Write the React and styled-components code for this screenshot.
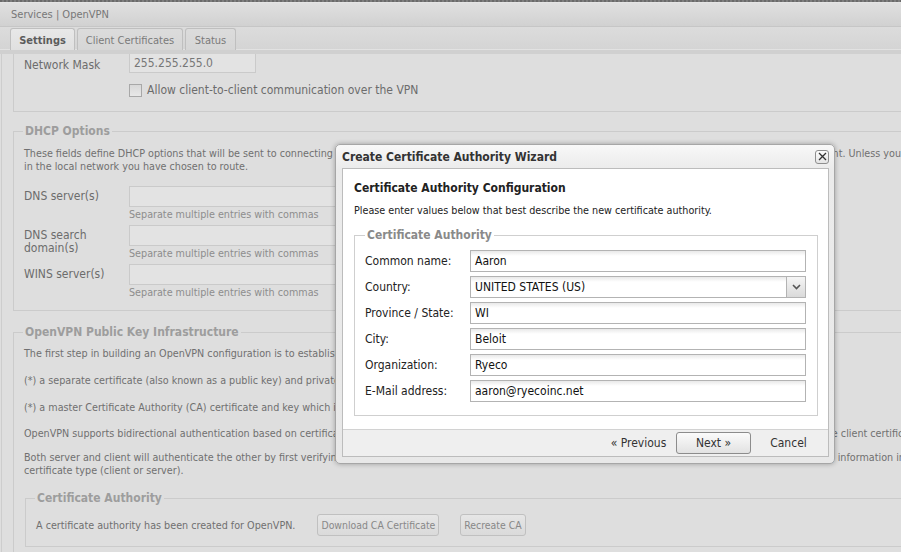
import React from "react";
import styled, { createGlobalStyle } from "styled-components";

const FONT = `"DejaVu Sans Condensed", "Liberation Sans", Arial, sans-serif`;

const GlobalStyle = createGlobalStyle`
  html, body {
    margin: 0;
    padding: 0;
    background: #dedede;
    overflow: hidden;
  }
  body {
    font-family: ${FONT};
  }
  * {
    box-sizing: border-box;
  }
`;

const Page = styled.div`
  position: relative;
  width: 901px;
  height: 552px;
  overflow: hidden;
  display: flex;
  flex-direction: column;
  background: #dedede;
`;

const TopStrip = styled.div`
  flex: none;
  height: 3px;
  background: repeating-linear-gradient(90deg, #6a6a6a 0 2px, #7e7e7e 2px 4px);
  border-bottom: 1px solid #e4e4e4;
`;

const Header = styled.div`
  flex: none;
  height: 24px;
  display: flex;
  align-items: center;
  padding-left: 11px;
  font-size: 11px;
  color: #777;
  background: linear-gradient(#e0e0e0, #d1d1d1);
  border-bottom: 1px solid #c6c6c6;
`;

const TabBar = styled.div`
  flex: none;
  height: 27px;
  display: flex;
  align-items: flex-end;
  gap: 2px;
  padding-left: 10px;
  background: linear-gradient(#dcdcdc, #d4d4d4);
  border-bottom: 4px solid #d0d0d0;
  box-shadow: inset 0 -1px 0 #e2e2e2;
`;

const Tab = styled.div`
  height: 22px;
  width: ${(p) => p.$w}px;
  padding-top: 1px;
  display: flex;
  align-items: center;
  justify-content: center;
  font-size: 11px;
  font-weight: ${(p) => (p.$active ? "bold" : "normal")};
  color: ${(p) => (p.$active ? "#5c5c5c" : "#7a7a7a")};
  background: ${(p) =>
    p.$active ? "linear-gradient(#e8e8e8, #e0e0e0)" : "linear-gradient(#dcdcdc, #d6d6d6)"};
  border: 1px solid #bfbfbf;
  border-bottom: none;
  border-radius: 3px 3px 0 0;
`;

const Viewport = styled.div`
  flex: 1;
  overflow: hidden;
  padding-left: 1px;
`;

const Panel = styled.div`
  width: 1100px;
  height: 100%;
  border-left: 1px solid #cdcdcd;
  padding-left: 11px;
`;

const Fieldset = styled.fieldset`
  margin: ${(p) => p.$mt || 0}px 0 0 ${(p) => p.$ml || 0}px;
  padding: 0 10px ${(p) => p.$pb || 12}px 10px;
  min-width: 0;
  width: ${(p) => p.$w || 1060}px;
  border: 1px solid #cbcbcb;
  ${(p) => p.$cut && "border-top: none;"}
`;

const Legend = styled.legend`
  padding: 0 2px;
  margin-left: -1px;
  font-size: 12px;
  line-height: 14px;
  font-weight: bold;
  color: #9d9d9d;
`;

const FieldRow = styled.div`
  display: grid;
  grid-template-columns: 105px auto;
  align-items: start;
  margin-top: ${(p) => p.$mt || 0}px;
`;

const FieldLabel = styled.div`
  font-size: 12px;
  line-height: 13px;
  color: #6c6c6c;
  padding-top: ${(p) => p.$pt || 4}px;
`;

const BgInput = styled.input`
  display: block;
  width: ${(p) => p.$w}px;
  height: ${(p) => p.$h || 21}px;
  margin: 0;
  padding: 0 4px;
  font-family: ${FONT};
  font-size: 12px;
  color: #777;
  background: #e3e3e3;
  border: 1px solid #cacaca;
  outline: none;
`;

const Hint = styled.div`
  margin-top: 1px;
  font-size: 10.7px;
  line-height: 13px;
  color: #8d8d8d;
`;

const Para = styled.p`
  margin: ${(p) => p.$mt}px 0 0;
  font-size: 10.7px;
  line-height: 13px;
  color: #707070;
  white-space: nowrap;
`;

const CheckRow = styled.label`
  display: flex;
  align-items: center;
  gap: 5px;
  font-size: 12px;
  color: #6c6c6c;
`;

const CheckBox = styled.span`
  width: 13px;
  height: 13px;
  border: 1px solid #a8a8a8;
  background: linear-gradient(#d8d8d8, #e8e8e8);
`;

const InlineRow = styled.div`
  display: flex;
  align-items: center;
  margin-top: 9px;
  font-size: 10.7px;
  color: #707070;
`;

const BgButton = styled.div`
  height: 22px;
  margin-left: ${(p) => p.$ml}px;
  padding: 0 3px;
  display: flex;
  align-items: center;
  font-size: 10.4px;
  color: #888;
  border: 1px solid #c0c0c0;
  border-radius: 3px;
  background: linear-gradient(#e6e6e6, #dadada);
`;

/* ---------- wizard ---------- */

const Window = styled.div`
  position: absolute;
  left: 335px;
  top: 144px;
  width: 500px;
  height: 320px;
  display: flex;
  flex-direction: column;
  padding: 0 5px 6px 6px;
  border: 1px solid #a6a6a6;
  border-radius: 5px;
  background: linear-gradient(#f8f8f8, #ebebeb 24px, #e8e8e8);
  box-shadow: 0 0 5px rgba(0, 0, 0, 0.3);
  font-family: ${FONT};
`;

const TitleBar = styled.div`
  flex: none;
  height: 23px;
  display: flex;
  align-items: center;
  justify-content: space-between;
  font-size: 12px;
  font-weight: bold;
  color: #333;
`;

const CloseButton = styled.div`
  width: 14px;
  height: 14px;
  display: flex;
  align-items: center;
  justify-content: center;
  border: 1px solid #8e8e8e;
  border-radius: 3px;
  background: linear-gradient(#fdfdfd, #e4e4e4);
`;

const Frame = styled.div`
  flex: 1;
  display: flex;
  flex-direction: column;
  border: 1px solid #bcbcbc;
`;

const Body = styled.div`
  flex: 1;
  background: #fff;
  padding: 12px 10px 0 11px;
`;

const BodyTitle = styled.div`
  font-size: 12px;
  line-height: 14px;
  font-weight: bold;
  color: #222;
`;

const BodyText = styled.div`
  margin-top: 9px;
  font-size: 10.7px;
  line-height: 13px;
  color: #222;
`;

const WizFieldset = styled.fieldset`
  margin: 11px 0 0;
  padding: 0 11px 13px 10px;
  min-width: 0;
  border: 1px solid #cfcfcf;
`;

const WizLegend = styled.legend`
  padding: 0 2px;
  margin-left: 0;
  font-size: 12px;
  line-height: 14px;
  font-weight: bold;
  color: #8a8a8a;
`;

const WizRows = styled.div`
  display: flex;
  flex-direction: column;
  gap: 4px;
  margin-top: 8px;
`;

const WizRow = styled.div`
  display: grid;
  grid-template-columns: 105px 1fr;
  align-items: center;
`;

const WizLabel = styled.div`
  font-size: 12px;
  color: #222;
`;

const TextBox = styled.div`
  position: relative;
  height: 22px;
  display: flex;
  align-items: center;
  padding-left: 4px;
  font-size: 12px;
  color: #111;
  border: 1px solid #b3b3b3;
  background: linear-gradient(#e9e9e9, #fff 5px);
`;

const Trigger = styled.div`
  position: absolute;
  top: 0;
  right: 0;
  bottom: 0;
  width: 19px;
  display: flex;
  align-items: center;
  justify-content: center;
  border-left: 1px solid #b3b3b3;
  background: linear-gradient(#f5f5f5, #dadada);
`;

const Footer = styled.div`
  flex: none;
  height: 27px;
  display: flex;
  align-items: center;
  justify-content: flex-end;
  padding-right: 2px;
  background: #efefef;
  border-top: 1px solid #d2d2d2;
`;

const FooterButton = styled.div`
  width: 75px;
  height: 22px;
  display: flex;
  align-items: center;
  justify-content: center;
  font-size: 12px;
  color: #333;
  border: 1px solid ${(p) => (p.$primary ? "#8c8c8c" : "transparent")};
  border-radius: 3px;
  background: ${(p) => (p.$primary ? "linear-gradient(#fbfbfb, #e2e2e2)" : "transparent")};
`;

const wizardFields = [
  ["Common name:", "Aaron"],
  ["Country:", "UNITED STATES (US)", true],
  ["Province / State:", "WI"],
  ["City:", "Beloit"],
  ["Organization:", "Ryeco"],
  ["E-Mail address:", "aaron@ryecoinc.net"],
];

function Wizard() {
  return (
    <Window>
      <TitleBar>
        <span>Create Certificate Authority Wizard</span>
        <CloseButton>
          <svg width="9" height="9" viewBox="0 0 9 9">
            <path d="M1 1L8 8M8 1L1 8" stroke="#333" strokeWidth="1.3" />
          </svg>
        </CloseButton>
      </TitleBar>
      <Frame>
        <Body>
          <BodyTitle>Certificate Authority Configuration</BodyTitle>
          <BodyText>
            Please enter values below that best describe the new certificate authority.
          </BodyText>
          <WizFieldset>
            <WizLegend>Certificate Authority</WizLegend>
            <WizRows>
              {wizardFields.map(([label, value, select]) => (
                <WizRow key={label}>
                  <WizLabel>{label}</WizLabel>
                  <TextBox>
                    {value}
                    {select && (
                      <Trigger>
                        <svg width="9" height="6" viewBox="0 0 9 6">
                          <path d="M1 1L4.5 4.5L8 1" fill="none" stroke="#555" strokeWidth="1.6" />
                        </svg>
                      </Trigger>
                    )}
                  </TextBox>
                </WizRow>
              ))}
            </WizRows>
          </WizFieldset>
        </Body>
        <Footer>
          <FooterButton>« Previous</FooterButton>
          <FooterButton $primary>Next »</FooterButton>
          <FooterButton>Cancel</FooterButton>
        </Footer>
      </Frame>
    </Window>
  );
}

const dhcpRows = [
  ["DNS server(s)"],
  ["DNS search", "domain(s)"],
  ["WINS server(s)"],
];

export default function App() {
  return (
    <Page>
      <GlobalStyle />
      <TopStrip />
      <Header>Services | OpenVPN</Header>
      <TabBar>
        <Tab $active $w={65}>Settings</Tab>
        <Tab $w={106}>Client Certificates</Tab>
        <Tab $w={51}>Status</Tab>
      </TabBar>
      <Viewport>
        <Panel>
          <Fieldset $cut $pb={14}>
            <FieldRow $mt={-1}>
              <FieldLabel $pt={6}>Network Mask</FieldLabel>
              <BgInput $w={127} $h={20} readOnly value="255.255.255.0" />
            </FieldRow>
            <FieldRow $mt={10}>
              <span />
              <CheckRow>
                <CheckBox />
                Allow client-to-client communication over the VPN
              </CheckRow>
            </FieldRow>
          </Fieldset>

          <Fieldset $mt={12} $pb={11}>
            <Legend>DHCP Options</Legend>
            <Para $mt={9}>
              These fields define DHCP options that will be sent to connecting OpenVPN clients. If these fields are left blank, clients will use the DNS servers of their OpenVPN endpoint. Unless you have DNS servers
              <br />
              in the local network you have chosen to route.
            </Para>
            {dhcpRows.map((lines, i) => (
              <FieldRow key={lines[0]} $mt={i === 0 ? 13 : 4}>
                <FieldLabel>
                  {lines.map((l) => (
                    <div key={l}>{l}</div>
                  ))}
                </FieldLabel>
                <div>
                  <BgInput $w={420} readOnly value="" />
                  <Hint>Separate multiple entries with commas</Hint>
                </div>
              </FieldRow>
            ))}
          </Fieldset>

          <Fieldset $mt={14}>
            <Legend>OpenVPN Public Key Infrastructure</Legend>
            <Para $mt={8}>
              The first step in building an OpenVPN configuration is to establish a PKI (public key infrastructure). The PKI consists of:
            </Para>
            <Para $mt={14}>
              (*) a separate certificate (also known as a public key) and private key for the server and each client, and
            </Para>
            <Para $mt={14}>
              (*) a master Certificate Authority (CA) certificate and key which is used to sign each of the server and client certificates.
            </Para>
            <Para $mt={13}>
              OpenVPN supports bidirectional authentication based on certificates, meaning that the client must authenticate the server, and in turn the server must authenticate the client certificate before trust is established.
            </Para>
            <Para $mt={11}>
              Both server and client will authenticate the other by first verifying that the presented certificate has been signed by its master certificate authority, and then by testing information in the now-authenticated certificate header, such as common name or
              <br />
              certificate type (client or server).
            </Para>
            <Fieldset $mt={14} $ml={1} $w={1030} $pb={10}>
              <Legend>Certificate Authority</Legend>
              <InlineRow>
                A certificate authority has been created for OpenVPN.
                <BgButton $ml={22}>Download CA Certificate</BgButton>
                <BgButton $ml={21}>Recreate CA</BgButton>
              </InlineRow>
            </Fieldset>
          </Fieldset>
        </Panel>
      </Viewport>
      <Wizard />
    </Page>
  );
}
